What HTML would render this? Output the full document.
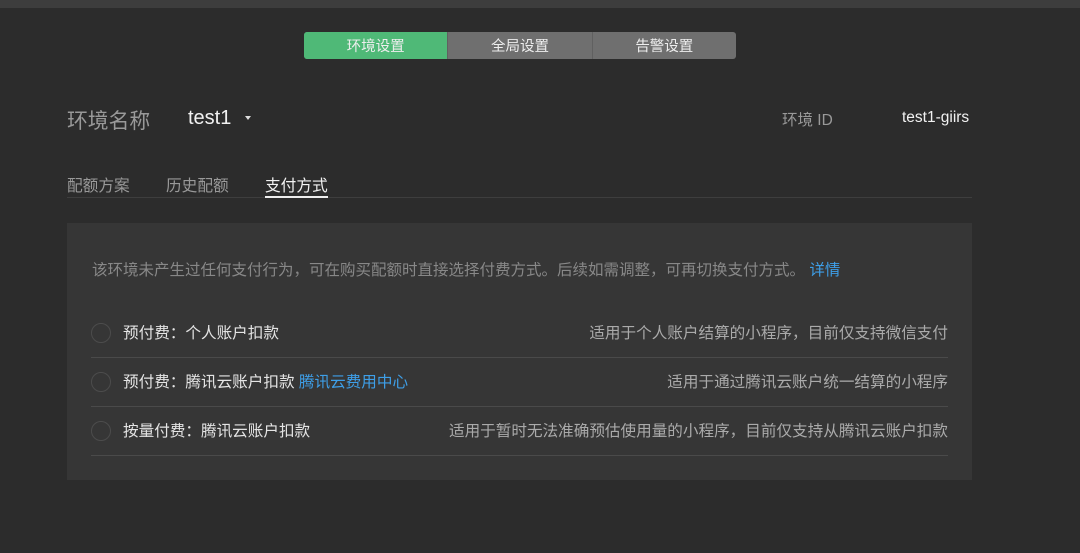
<!DOCTYPE html>
<html><head><meta charset="utf-8"><style>
*{margin:0;padding:0;box-sizing:border-box}
body{width:1080px;height:553px;background:#2c2c2c;font-family:"Liberation Sans","Noto Sans CJK SC",sans-serif;position:relative;overflow:hidden;color:#ddd}
.top{position:absolute;left:0;top:0;width:1080px;height:8px;background:#3d3d3d}
.seg{position:absolute;left:304px;top:32px;width:432px;height:27px;border-radius:3px;overflow:hidden;display:flex;background:#6f6f6f}
.seg div{flex:1;text-align:center;line-height:27px;padding-top:2px;font-size:14.5px;color:#eee;border-left:1px solid #606060}
.seg div:first-child{background:#4fb977;border:none}
.abs{position:absolute;white-space:nowrap}
.panel{position:absolute;left:67px;top:223px;width:905px;height:257px;background:#363636}
.row{position:absolute;left:91px;width:857px;height:50px;border-bottom:1px solid #4a4a4a;font-size:15.6px}
.row .c{position:absolute;left:0;top:15px;width:20px;height:20px;border:1px solid #4c4c4c;border-radius:50%}
.row .l{position:absolute;left:32px;top:13px;color:#e4e4e4}
.row .r{position:absolute;right:0;top:13px;color:#aaa;font-size:15.6px}
a{color:#3e9fe8;text-decoration:none}
</style></head><body>
<div class="top"></div>
<div class="seg"><div>环境设置</div><div>全局设置</div><div>告警设置</div></div>
<div class="abs" style="left:67px;top:104px;font-size:20.8px;color:#999">环境名称</div>
<div class="abs" style="left:188px;top:107px;font-size:20px;color:#f2f2f2">test1</div>
<div class="abs" style="left:245px;top:116px;width:0;height:0;border-left:3px solid transparent;border-right:3px solid transparent;border-top:4px solid #ddd"></div>
<div class="abs" style="left:782px;top:108px;font-size:15.5px;color:#999">环境 ID</div>
<div class="abs" style="left:902px;top:109px;font-size:15.5px;color:#f2f2f2">test1-giirs</div>
<div class="abs" style="left:67px;top:173px;font-size:15.7px;color:#999">配额方案</div>
<div class="abs" style="left:166px;top:173px;font-size:15.7px;color:#999">历史配额</div>
<div class="abs" style="left:265px;top:173px;font-size:15.7px;color:#f2f2f2">支付方式</div>
<div class="abs" style="left:67px;top:197px;width:905px;height:1px;background:#3e3e3e"></div>
<div class="abs" style="left:265px;top:196px;width:63px;height:2px;background:#eee"></div>
<div class="panel"></div>
<div class="abs" style="left:92px;top:258px;font-size:15.5px;color:#888">该环境未产生过任何支付行为，可在购买配额时直接选择付费方式。后续如需调整，可再切换支付方式。 <a>详情</a></div>
<div class="row" style="top:308px"><div class="c"></div><div class="l">预付费：个人账户扣款</div><div class="r">适用于个人账户结算的小程序，目前仅支持微信支付</div></div>
<div class="row" style="top:357px"><div class="c"></div><div class="l">预付费：腾讯云账户扣款 <a>腾讯云费用中心</a></div><div class="r">适用于通过腾讯云账户统一结算的小程序</div></div>
<div class="row" style="top:406px"><div class="c"></div><div class="l">按量付费：腾讯云账户扣款</div><div class="r">适用于暂时无法准确预估使用量的小程序，目前仅支持从腾讯云账户扣款</div></div>
</body></html>
